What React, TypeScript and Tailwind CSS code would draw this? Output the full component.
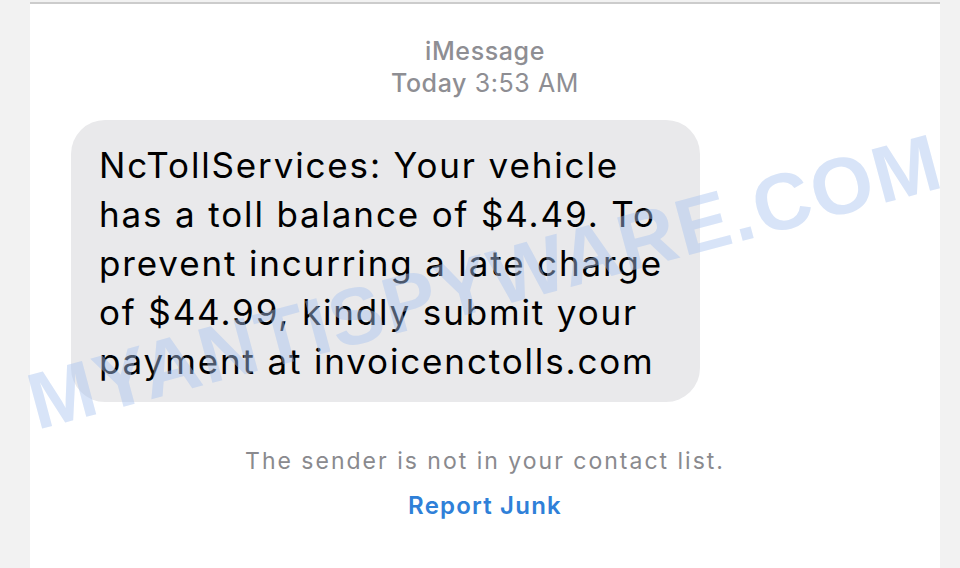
import React from "react";

const bodyLines = [
  "NcTollServices: Your vehicle",
  "has a toll balance of $4.49. To",
  "prevent incurring a late charge",
  "of $44.99, kindly submit your",
  "payment at invoicenctolls.com",
];

const App = () => {
  return (
    <div className="relative w-[960px] h-[568px] overflow-hidden bg-[#f2f2f2] font-['Inter','Liberation_Sans',Arial,sans-serif]">
      <div className="ml-[30px] mt-[2px] w-[910px] h-[566px] bg-white border-t-2 border-[#cccccc] flex flex-col">
        {/* Header */}
        <div className="flex flex-col items-center pt-[31px] text-[#8e8e93] text-[25px] leading-[32px] tracking-[0.6px]">
          <div className="font-medium">iMessage</div>
          <div>
            <span className="font-medium">Today</span> 3:53 AM
          </div>
        </div>

        {/* Bubble */}
        <div className="ml-[41px] mt-[21px] w-[629px] h-[282px] rounded-[34px] bg-[#e9e9eb] pl-[28px] pt-[21px] text-[35px] leading-[49px] text-black tracking-[1.85px]">
          {bodyLines.map((line, i) => (
            <div key={i} className="whitespace-nowrap">{line}</div>
          ))}
        </div>

        {/* Footer */}
        <div className="flex flex-col items-center mt-[44px]">
          <div className="text-[23px] leading-[30px] text-[#8a8a8e] tracking-[2px]">
            The sender is not in your contact list.
          </div>
          <div className="mt-[15px] text-[24px] leading-[30px] font-semibold text-[#2f80d8] tracking-[1.2px]">
            Report Junk
          </div>
        </div>
      </div>

      {/* Watermark */}
      <div className="pointer-events-none absolute left-[485px] top-[282px] -translate-x-1/2 -translate-y-1/2 -rotate-[15deg] whitespace-nowrap text-[80px] font-bold tracking-[2px] text-[#a9c4f0] opacity-45 font-['Liberation_Sans',Arial,sans-serif]">
        MYANTISPYWARE.COM
      </div>
    </div>
  );
};

export default App;
